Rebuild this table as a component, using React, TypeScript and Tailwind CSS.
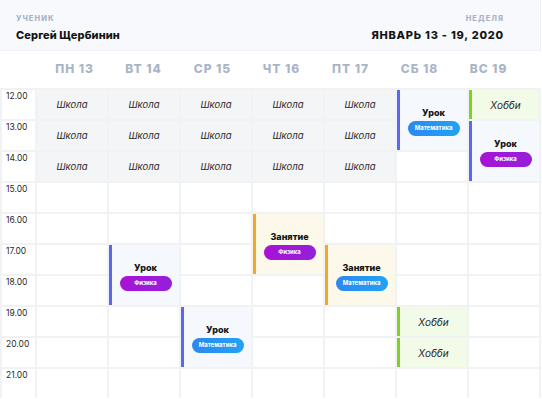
import React from "react";

type Ev = {
  pos: string;
  kind: "school" | "hobby" | "lesson";
  title?: string;
  subject?: "Математика" | "Физика";
  tone?: "blue" | "orange";
};

const days = ["ПН 13", "ВТ 14", "СР 15", "ЧТ 16", "ПТ 17", "СБ 18", "ВС 19"];
const times = ["12.00", "13.00", "14.00", "15.00", "16.00", "17.00", "18.00", "19.00", "20.00", "21.00"];

const rowStart = [
  "row-start-1",
  "row-start-2",
  "row-start-3",
  "row-start-4",
  "row-start-5",
  "row-start-6",
  "row-start-7",
  "row-start-8",
  "row-start-9",
  "row-start-10",
];
const colStart = ["col-start-1", "col-start-2", "col-start-3", "col-start-4", "col-start-5", "col-start-6", "col-start-7", "col-start-8"];

const events: Ev[] = [
  { pos: "col-start-2 row-start-1", kind: "school" },
  { pos: "col-start-3 row-start-1", kind: "school" },
  { pos: "col-start-4 row-start-1", kind: "school" },
  { pos: "col-start-5 row-start-1", kind: "school" },
  { pos: "col-start-6 row-start-1", kind: "school" },
  { pos: "col-start-2 row-start-2", kind: "school" },
  { pos: "col-start-3 row-start-2", kind: "school" },
  { pos: "col-start-4 row-start-2", kind: "school" },
  { pos: "col-start-5 row-start-2", kind: "school" },
  { pos: "col-start-6 row-start-2", kind: "school" },
  { pos: "col-start-2 row-start-3", kind: "school" },
  { pos: "col-start-3 row-start-3", kind: "school" },
  { pos: "col-start-4 row-start-3", kind: "school" },
  { pos: "col-start-5 row-start-3", kind: "school" },
  { pos: "col-start-6 row-start-3", kind: "school" },
  { pos: "col-start-7 row-start-1 row-span-2", kind: "lesson", title: "Урок", subject: "Математика", tone: "blue" },
  { pos: "col-start-8 row-start-1", kind: "hobby" },
  { pos: "col-start-8 row-start-2 row-span-2", kind: "lesson", title: "Урок", subject: "Физика", tone: "blue" },
  { pos: "col-start-5 row-start-5 row-span-2", kind: "lesson", title: "Занятие", subject: "Физика", tone: "orange" },
  { pos: "col-start-3 row-start-6 row-span-2", kind: "lesson", title: "Урок", subject: "Физика", tone: "blue" },
  { pos: "col-start-6 row-start-6 row-span-2", kind: "lesson", title: "Занятие", subject: "Математика", tone: "orange" },
  { pos: "col-start-4 row-start-8 row-span-2", kind: "lesson", title: "Урок", subject: "Математика", tone: "blue" },
  { pos: "col-start-7 row-start-8", kind: "hobby" },
  { pos: "col-start-7 row-start-9", kind: "hobby" },
];

function Pill({ subject }: { subject: "Математика" | "Физика" }) {
  const cls =
    subject === "Математика"
      ? "bg-gradient-to-r from-[#2c88ee] to-[#1fa3f6]"
      : "bg-gradient-to-r from-[#a811d6] to-[#951fd9]";
  return (
    <div
      className={`${cls} w-[52px] h-[15px] rounded-full flex items-center justify-center text-white text-[6px] font-bold leading-none`}
    >
      {subject}
    </div>
  );
}

function EventCell({ ev }: { ev: Ev }) {
  if (ev.kind === "school") {
    return (
      <div className={`${ev.pos} bg-[#f4f5f7] flex items-center justify-center pt-[2px] italic text-[9.5px] text-[#2a2a2a]`}>
        Школа
      </div>
    );
  }
  if (ev.kind === "hobby") {
    return (
      <div
        className={`${ev.pos} bg-[#f2fbe8] border-l-[3px] border-[#7ed321] flex items-center justify-center pt-[1px] italic text-[10px] text-[#2a2a2a]`}
      >
        Хобби
      </div>
    );
  }
  const tone = ev.tone === "orange" ? "bg-[#fcf9ea] border-[#f5a623]" : "bg-[#f5f9fe] border-[#5b67f1]";
  return (
    <div className={`${ev.pos} ${tone} border-l-[3px] flex flex-col items-center justify-center gap-[4px] pt-[3px]`}>
      <div className="text-[9px] font-extrabold leading-none text-[#151515]">{ev.title}</div>
      <Pill subject={ev.subject!} />
    </div>
  );
}

export default function App() {
  return (
    <div
      className="w-[542px] h-[399px] bg-white overflow-hidden"
      style={{ fontFamily: "Inter, 'Noto Sans', sans-serif" }}
    >
      <div className="w-[541px]">
        <div className="h-[51px] bg-[#f7f9fc] border-b border-[#eceff3] border-r flex items-center justify-between pl-[16px] pr-[36px]">
          <div className="flex flex-col gap-[8px] pt-[6px]">
            <div className="text-[7.5px] font-extrabold tracking-[0.14em] text-[#a7b3c6] leading-none">УЧЕНИК</div>
            <div className="text-[11px] font-extrabold tracking-[0.01em] text-[#151515] leading-none">Сергей Щербинин</div>
          </div>
          <div className="flex flex-col items-end gap-[8px] pt-[6px]">
            <div className="text-[7.5px] font-extrabold tracking-[0.14em] text-[#a7b3c6] leading-none">НЕДЕЛЯ</div>
            <div className="text-[11px] font-extrabold tracking-[0.07em] text-[#151515] leading-none">ЯНВАРЬ 13 - 19, 2020</div>
          </div>
        </div>
        <div className="h-[37px] grid grid-cols-7 items-center pl-[40px] pr-[18px] pb-[1px]">
          {days.map((d) => (
            <div key={d} className="text-center text-[12px] font-extrabold tracking-[0.08em] text-[#a9b5c7] leading-none">
              {d}
            </div>
          ))}
        </div>
        <div className="grid grid-cols-[33px_repeat(7,70px)] grid-rows-[repeat(10,29px)] gap-[2px] p-[2px] pb-0 bg-[#f0f2f4]">
          {times.map((t, r) => (
            <React.Fragment key={t}>
              <div className={`${colStart[0]} ${rowStart[r]} bg-white pl-[4px] pt-[2px] text-[8.5px] text-[#2a2a2a] leading-none`}>
                {t}
              </div>
              {days.map((d, c) => (
                <div key={d} className={`${colStart[c + 1]} ${rowStart[r]} bg-white`} />
              ))}
            </React.Fragment>
          ))}
          {events.map((ev, i) => (
            <EventCell key={i} ev={ev} />
          ))}
        </div>
      </div>
    </div>
  );
}
